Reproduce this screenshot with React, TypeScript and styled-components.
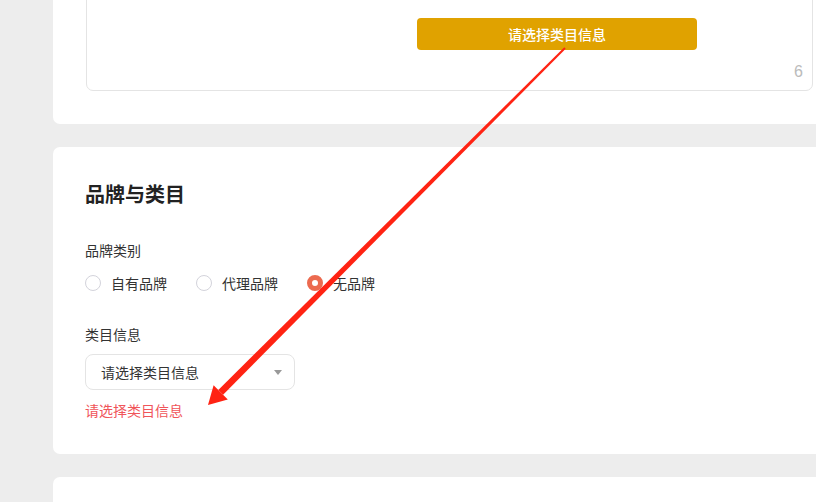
import styled, { createGlobalStyle } from "styled-components";

const GlobalStyle = createGlobalStyle`
  html, body {
    margin: 0;
    padding: 0;
    background: #ededed;
    font-family: "Noto Sans CJK SC", "Noto Sans", sans-serif;
    color: #333;
  }
`;

const Frame = styled.div`
  position: relative;
  height: 100vh;
  overflow: hidden;
  display: flex;
  flex-direction: column;
`;

const Page = styled.div`
  display: flex;
  flex-direction: column;
  gap: 23px;
  margin-top: -40px;
  padding-left: 53px;
  margin-right: -30px;
`;

const Card = styled.section<{ $pad: string }>`
  background: #fff;
  border-radius: 7px;
  padding: ${(p) => p.$pad};
  display: flex;
  flex-direction: column;
  flex-shrink: 0;
`;

const TextBox = styled.div`
  height: 111px;
  box-sizing: border-box;
  border: 1px solid #e4e4e4;
  border-radius: 7px;
  display: flex;
  flex-direction: column;
`;

const PickButton = styled.button`
  margin: 37px 0 0 330px;
  width: 280px;
  height: 32px;
  border: none;
  border-radius: 4px;
  background: #e0a200;
  color: #fff;
  font-family: inherit;
  font-size: 14px;
  font-weight: 500;
  padding: 0;
`;

const Counter = styled.span`
  align-self: flex-end;
  margin: 12px 9px 0 0;
  font-family: "Liberation Sans", sans-serif;
  font-size: 16px;
  line-height: 20px;
  color: #bbb;
`;

const Title = styled.h2`
  margin: 0;
  font-size: 20px;
  line-height: 28px;
  font-weight: 700;
  color: #222;
`;

const FieldLabel = styled.div<{ $top: number }>`
  margin-top: ${(p) => p.$top}px;
  font-size: 14px;
  line-height: 20px;
  color: #333;
`;

const RadioRow = styled.div`
  margin-top: 13px;
  display: flex;
  align-items: center;
  gap: 29px;
  height: 20px;
`;

const RadioItem = styled.label`
  display: flex;
  align-items: center;
  gap: 10px;
  font-size: 14px;
  line-height: 20px;
  color: #333;
`;

const RadioDot = styled.span<{ $on?: boolean }>`
  width: 16px;
  height: 16px;
  box-sizing: border-box;
  border-radius: 50%;
  border: ${(p) => (p.$on ? "5px solid #ec6a4f" : "1px solid #d3d3db")};
  background: #fff;
`;

const Select = styled.div`
  margin-top: 10px;
  width: 210px;
  height: 36px;
  box-sizing: border-box;
  border: 1px solid #e4e4e4;
  border-radius: 8px;
  padding: 0 12px 0 15px;
  display: flex;
  align-items: center;
  justify-content: space-between;
  font-size: 14px;
  color: #333;
`;

const Caret = styled.span`
  width: 0;
  height: 0;
  border-left: 4px solid transparent;
  border-right: 4px solid transparent;
  border-top: 5px solid #999;
`;

const ErrorText = styled.div`
  margin-top: 10px;
  font-size: 14px;
  line-height: 20px;
  color: #f0555a;
`;

const ArrowLayer = styled.svg`
  position: absolute;
  left: 0;
  top: 0;
  pointer-events: none;
`;

const brandTypes = [
  { label: "自有品牌", on: false },
  { label: "代理品牌", on: false },
  { label: "无品牌", on: true },
];

export default function App() {
  return (
    <Frame>
      <GlobalStyle />
      <Page>
        <Card $pad="20px 33px 33px">
          <TextBox>
            <PickButton>请选择类目信息</PickButton>
            <Counter>6</Counter>
          </TextBox>
        </Card>
        <Card $pad="33px 32px 34px">
          <Title>品牌与类目</Title>
          <FieldLabel $top={32}>品牌类别</FieldLabel>
          <RadioRow>
            {brandTypes.map((b) => (
              <RadioItem key={b.label}>
                <RadioDot $on={b.on} />
                {b.label}
              </RadioItem>
            ))}
          </RadioRow>
          <FieldLabel $top={31}>类目信息</FieldLabel>
          <Select>
            <span>请选择类目信息</span>
            <Caret />
          </Select>
          <ErrorText>请选择类目信息</ErrorText>
        </Card>
        <Card $pad="0" style={{ height: 120 }} />
      </Page>
      <ArrowLayer width="816" height="502" viewBox="0 0 816 502">
        <polygon
          points="565.7,48.7 564.3,47.3 218.3,389.9 223.1,394.7"
          fill="#ff2313"
        />
        <polygon points="208,405 213.6,385.2 227.8,399.4" fill="#ff2313" />
      </ArrowLayer>
    </Frame>
  );
}
